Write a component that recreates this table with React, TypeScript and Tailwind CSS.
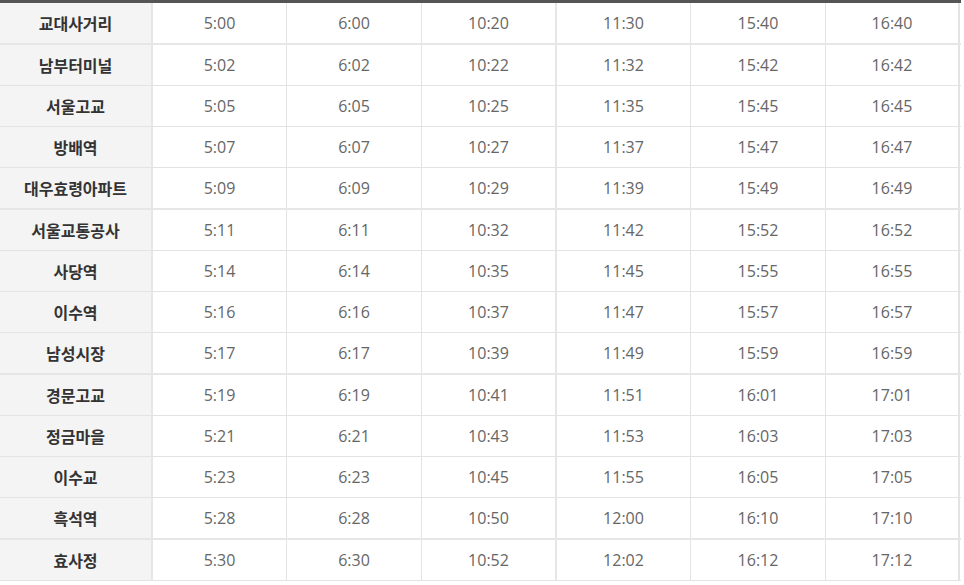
import React from 'react';

const rows: [string, string[]][] = [
  ['교대사거리', ['5:00', '6:00', '10:20', '11:30', '15:40', '16:40']],
  ['남부터미널', ['5:02', '6:02', '10:22', '11:32', '15:42', '16:42']],
  ['서울고교', ['5:05', '6:05', '10:25', '11:35', '15:45', '16:45']],
  ['방배역', ['5:07', '6:07', '10:27', '11:37', '15:47', '16:47']],
  ['대우효령아파트', ['5:09', '6:09', '10:29', '11:39', '15:49', '16:49']],
  ['서울교통공사', ['5:11', '6:11', '10:32', '11:42', '15:52', '16:52']],
  ['사당역', ['5:14', '6:14', '10:35', '11:45', '15:55', '16:55']],
  ['이수역', ['5:16', '6:16', '10:37', '11:47', '15:57', '16:57']],
  ['남성시장', ['5:17', '6:17', '10:39', '11:49', '15:59', '16:59']],
  ['경문고교', ['5:19', '6:19', '10:41', '11:51', '16:01', '17:01']],
  ['정금마을', ['5:21', '6:21', '10:43', '11:53', '16:03', '17:03']],
  ['이수교', ['5:23', '6:23', '10:45', '11:55', '16:05', '17:05']],
  ['흑석역', ['5:28', '6:28', '10:50', '12:00', '16:10', '17:10']],
  ['효사정', ['5:30', '6:30', '10:52', '12:02', '16:12', '17:12']],
];

// rows after which the separator is doubled
const thick = [0, 4, 8, 12];

const cellWidths = [
  'w-[134px] border-r border-[#e3e3e3]',
  'w-[135px] border-r border-[#e3e3e3]',
  'w-[135px] border-r-2 border-[#e6e6e6]',
  'w-[134px] border-r border-[#e3e3e3]',
  'w-[135px] border-r border-[#e3e3e3]',
  'w-[134px] border-r-2 border-[#e3e3e3]',
];

export default function App() {
  return (
    <div className="bg-white w-[964px] h-[585px] font-['Open_Sans','Noto_Sans_CJK_KR',sans-serif]">
      <div className="w-[961px] border-t-[3px] border-[#555555]">
        {rows.map(([stop, times], i) => (
          <div
            key={stop}
            className={
              'flex ' +
              (thick.includes(i)
                ? 'h-[42px] border-b-2 border-[#e6e6e6]'
                : 'h-[41px] border-b border-[#e3e3e3]')
            }
          >
            <div className="w-[153px] shrink-0 bg-[#f4f4f4] border-r-2 border-[#e6e6e6] flex items-center justify-center text-[16px] font-semibold text-[#333333] font-['Noto_Sans_CJK_KR',sans-serif]">
              {stop}
            </div>
            {times.map((t, j) => (
              <div
                key={j}
                className={cellWidths[j] + ' shrink-0 flex items-center justify-center text-[16px] text-[#666666]'}
              >
                {t}
              </div>
            ))}
          </div>
        ))}
      </div>
    </div>
  );
}
